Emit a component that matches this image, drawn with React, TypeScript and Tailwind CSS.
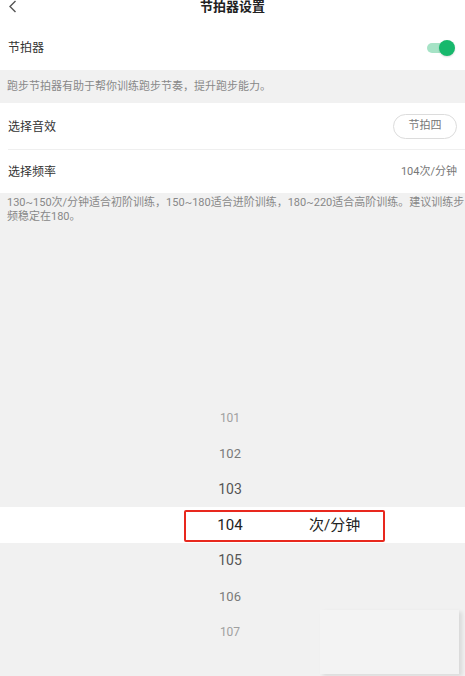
import React from "react";

const rows = [
  { n: "101", cls: "text-[12px] text-[#a0a0a0]" },
  { n: "102", cls: "text-[13px] text-[#7a7a7a]" },
  { n: "103", cls: "text-[14px] text-[#555]" },
  { n: "104", cls: "", sel: true },
  { n: "105", cls: "text-[14px] text-[#555]" },
  { n: "106", cls: "text-[13px] text-[#7a7a7a]" },
  { n: "107", cls: "text-[12px] text-[#a0a0a0]" },
];

export default function App() {
  return (
    <div
      className="relative w-[465px] h-[676px] overflow-hidden bg-white flex flex-col"
      style={{ fontFamily: 'Roboto, "Noto Sans CJK SC", "Noto Sans", sans-serif' }}
    >
      {/* header */}
      <div className="h-[25px] flex items-start shrink-0 relative">
        <svg width="10" height="14" viewBox="0 0 10 14" className="ml-[8px] mt-[0px]">
          <path d="M7.5 1 L2 6.5 L7.5 12" fill="none" stroke="#555" strokeWidth="1.4" />
        </svg>
        <div className="flex-1 text-center text-[13px] font-bold text-[#222] leading-[13px] mt-[0px] pr-[18px]">
          节拍器设置
        </div>
      </div>

      {/* metronome row */}
      <div className="h-[45px] flex items-center justify-between pl-[8px] pr-[10px] shrink-0">
        <span className="text-[12px] text-[#333] mt-[1px]">节拍器</span>
        <div className="relative w-[28px] h-[16px] flex items-center">
          <div className="w-[22px] h-[10px] rounded-full bg-[#a6e3c6]" />
          <div className="absolute right-0 top-0 w-[16px] h-[16px] rounded-full bg-[#17b86c] shadow-[0_1px_2px_rgba(0,0,0,0.15)]" />
        </div>
      </div>

      {/* desc 1 */}
      <div className="h-[33px] bg-[#f1f1f1] flex items-center pl-[7px] shrink-0">
        <span className="text-[11px] text-[#888] mt-[1px]">跑步节拍器有助于帮你训练跑步节奏，提升跑步能力。</span>
      </div>

      {/* sound row */}
      <div className="h-[46px] flex items-center justify-between pl-[8px] pr-[8px] shrink-0">
        <span className="text-[12px] text-[#333] mt-[1px]">选择音效</span>
        <div className="w-[64px] h-[25px] rounded-full border border-[#dcdcdc] flex items-center justify-center text-[11px] text-[#777]">
          节拍四
        </div>
      </div>
      <div className="h-px bg-[#efefef] ml-[8px] shrink-0" />

      {/* rate row */}
      <div className="h-[43px] flex items-center justify-between pl-[8px] pr-[8px] shrink-0">
        <span className="text-[12px] text-[#333] mt-[1px]">选择频率</span>
        <span className="text-[11px] text-[#777] mt-[1px]">104次/分钟</span>
      </div>

      {/* gray picker area */}
      <div className="flex-1 bg-[#f1f1f1] flex flex-col">
        <div className="pl-[7px] pt-[3px] text-[11px] leading-[14px] text-[#888] whitespace-nowrap">
          130~150次/分钟适合初阶训练，150~180适合进阶训练，180~220适合高阶训练。建议训练步
          <br />
          频稳定在180。
        </div>
        <div className="mt-[176px] flex flex-col">
          {rows.map((r) =>
            r.sel ? (
              <div key={r.n} className="relative h-[35.7px] bg-white flex items-center">
                <div className="w-[200px]" />
                <div className="w-[60px] text-center text-[15px] text-[#222]">{r.n}</div>
                <div className="ml-[49px] text-[15px] text-[#222]">次/分钟</div>
                <div className="absolute left-[184px] top-[3px] w-[201px] h-[32px] border-2 border-[#e8281e] rounded-[2px]" />
              </div>
            ) : (
              <div key={r.n} className="h-[35.7px] flex items-center">
                <div className="w-[200px]" />
                <div className={"w-[60px] text-center " + r.cls}>{r.n}</div>
              </div>
            )
          )}
        </div>
      </div>

      {/* watermark-like overlay */}
      <div className="absolute left-[320px] top-[610px] w-[139px] h-[64px] bg-[#f3f3f3] shadow-[3px_2px_4px_rgba(0,0,0,0.10)]" />
    </div>
  );
}
